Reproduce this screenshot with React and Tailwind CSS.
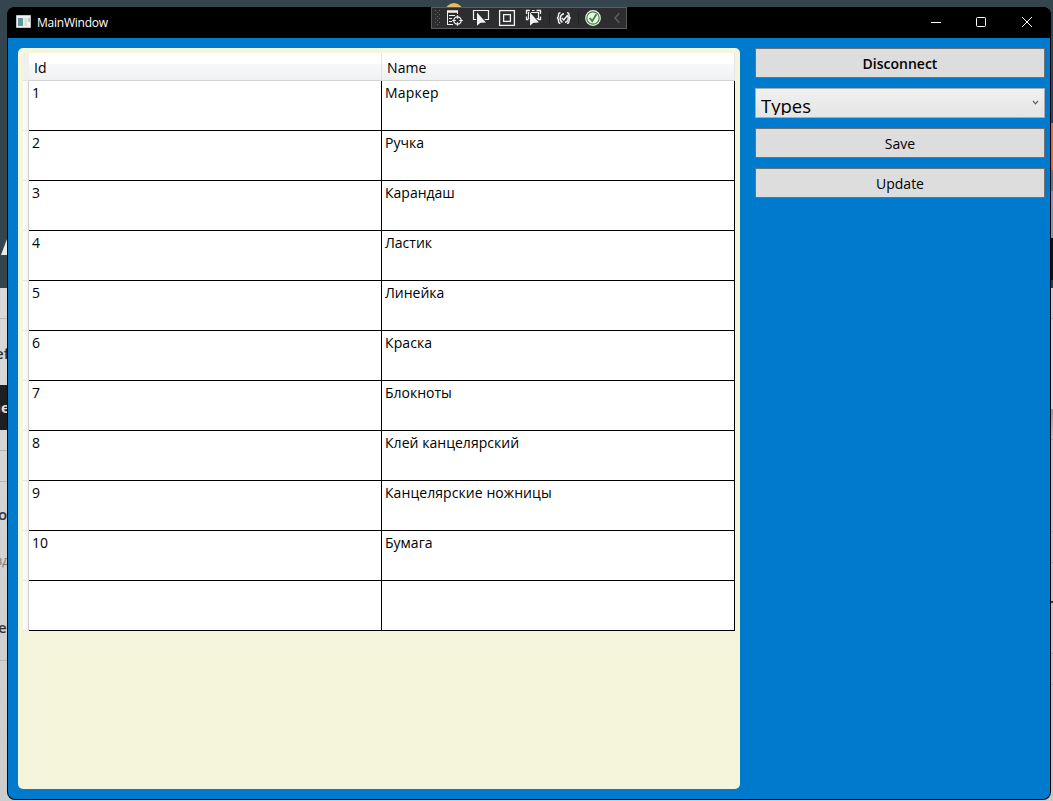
import React from "react";

const rows = [
  ["1", "Маркер", "tracking-[0.2px]"],
  ["2", "Ручка", "tracking-[0.05px]"],
  ["3", "Карандаш", "tracking-[0px]"],
  ["4", "Ластик", "tracking-[0px]"],
  ["5", "Линейка", "tracking-[0px]"],
  ["6", "Краска", "tracking-[0.1px]"],
  ["7", "Блокноты", "tracking-[0px]"],
  ["8", "Клей канцелярский", "tracking-[0.04px]"],
  ["9", "Канцелярские ножницы", "tracking-[0.07px]"],
  ["10", "Бумага", "tracking-[0px]"],
  ["", "", ""],
];

function DebugToolbar() {
  return (
    <div className="absolute left-[431px] top-[7px] h-[22px] w-[196px] bg-[#2d2d30]">
      <svg width="196" height="22" viewBox="0 0 196 22" fill="none" stroke="#f1f1f1">
        <rect x="0.5" y="0.5" width="195" height="21" stroke="#5c5c5e" />
        <path d="M4.5 3v16M8.5 3v16" stroke="#68686a" strokeDasharray="1 3" />
        <path d="M6.5 5v14" stroke="#68686a" strokeDasharray="1 3" />
        <path d="M16 4.500h11" strokeWidth="2.500" />
        <path d="M16.500 4v13.500M16 17.500h6M18 8.500h6M18 11.500h3M18 14.500h3M26.500 5v2" />
        <circle cx="26.500" cy="13.500" r="3.700" strokeWidth="1.300" />
        <path d="M26.500 8.200v3.600M26.500 15.200v3.600M21.200 13.500h3.600M28.200 13.500h3.600" strokeWidth="1.200" />
        <path d="M47 12.500h-4.500v-9h15v9h-4" strokeWidth="1.200" />
        <path d="M46 5.500v13.300l3.100-2.900 1.700-.2 4.200-.3z" fill="#f1f1f1" stroke="#2d2d30" strokeWidth="1.600" paintOrder="stroke" />
        <rect x="68.600" y="3.600" width="14.800" height="14.800" strokeWidth="1.300" />
        <rect x="72.600" y="7.600" width="6.800" height="6.800" strokeWidth="1.300" />
        <path d="M95.500 7V3.500h3.500M105.500 3.500h4V7M95.500 9.500v3h2M109.500 9.500v3h-3.500" strokeWidth="1.300" />
        <path d="M99 11.500h-1.500v-6h10v6h-3M101 3.500h2.500" strokeWidth="1.200" />
        <path d="M99 5.500v13.300l3.100-2.900 1.700-.2 4.200-.3z" fill="#f1f1f1" stroke="#2d2d30" strokeWidth="1.600" paintOrder="stroke" />
        <path d="M118.500 4v14M147.500 4v14" stroke="#222224" />
        <path d="M129.500 5.600c-2 0-2 .9-2 2.400 0 2-.5 3-1.700 3 1.200 0 1.700 1 1.700 3 0 1.500 0 2.400 2 2.400M136 5.600c2 0 2 .9 2 2.400 0 2 .5 3 1.700 3-1.200 0-1.700 1-1.700 3 0 1.500 0 2.400-2 2.400" strokeWidth="1.400" />
        <path d="M131.500 15.300a4.600 4.600 0 0 1 1.500-8.500M134 6.800M136.500 8.500a4.600 4.600 0 0 1-2.500 7M130.800 11l2 2 4-5" strokeWidth="1.500" />
        <circle cx="162" cy="11" r="7.900" fill="#f1f1f1" stroke="none" />
        <circle cx="162" cy="11" r="6.200" stroke="#388a34" strokeWidth="1.200" />
        <path d="M158.700 11l2.500 3.200 4.200-7" stroke="#388a34" strokeWidth="1.900" />
        <path d="M188.300 6.300L184 11l4.300 4.700" stroke="#626264" strokeWidth="1.300" />
      </svg>
    </div>
  );
}

function TitleBar() {
  return (
    <header className="flex h-[31px] shrink-0 items-start bg-black pl-[9px] text-white">
      <svg width="15" height="14" viewBox="0 0 15 14" className="mt-2 shrink-0">
        <defs>
          <linearGradient id="app" x2="1" y2="1">
            <stop stopColor="#5b8fb5" />
            <stop offset="1" stopColor="#5ba57a" />
          </linearGradient>
        </defs>
        <path d="M.5 .5h14v12H.5z" fill="#f0f0f0" stroke="#c4c4c4" />
        <path d="M2 3h5v8H2z" fill="url(#app)" />
        <path d="M8.500 3h2.500v8H8.500z" fill="#dcdcdc" />
        <path d="M12 3h2v4h-2z" fill="#b4cfc0" />
      </svg>
      <span className="ml-[6px] mt-[8px] text-[12px] leading-4 tracking-[-0.23px]">MainWindow</span>
      <svg width="104" height="12" viewBox="0 0 104 12" className="ml-auto mr-[17px] mt-[9px]" fill="none" stroke="white">
        <path d="M1 6.500h10" />
        <rect x="46.500" y="1.500" width="9" height="9" rx="1" />
        <path d="M92 1l10 10M102 1L92 11" />
      </svg>
    </header>
  );
}

function TypesGrid() {
  return (
    <section className="h-[741px] w-[722px] shrink-0 rounded-[5px] bg-[#f5f5dc] p-[5px] text-[14px] leading-5 text-black">
      <div className="flex h-7 w-[712px]">
        <div className="w-[6px] border-b border-[#e4e4e4] bg-[#f0f0f0]" />
        <div className="flex flex-1 border-b border-[#d2d3d5] bg-[linear-gradient(#fff_0_11px,#f7f8fa_11px,#f0f1f3)]">
          <div className="w-[353px] border-r border-[#e3e4e6] pl-[5px] pt-[5px]">Id</div>
          <div className="flex-1 border-r border-[#e3e4e6] pl-[5px] pt-[5px] tracking-[0.1px]">Name</div>
        </div>
      </div>
      {rows.map(([id, name, tracking], i) => (
        <div key={i} className="flex h-[50px] w-[712px]">
          <div className="w-[6px] border-b border-r border-b-[#e4e4e4] border-r-[#cfcfcf] bg-linear-to-r from-white to-[#f3f3f3]" />
          <div className="w-[353px] border-b border-r border-black bg-white pl-[3px] pt-[2px]">{id}</div>
          <div className={"flex-1 border-b border-r border-black bg-white pl-[3px] pt-[2px] whitespace-nowrap " + tracking}>{name}</div>
        </div>
      ))}
    </section>
  );
}

function Sidebar() {
  const button = "h-[30px] w-full border border-[#707070] bg-[#dddddd] pt-px text-center text-[14px] leading-7";
  return (
    <aside className="flex w-[290px] flex-col gap-[10px] text-black">
      <button className={button + " font-semibold"}>Disconnect</button>
      <div className="flex h-[30px] justify-between overflow-hidden border border-[#acacac] bg-linear-to-b from-[#f0f0f0] to-[#e5e5e5] pl-[5px] pr-[5px]">
        <div className="h-[26px] overflow-hidden pt-[4px] text-[18.500px] leading-[26px]">Types</div>
        <svg width="7" height="6" viewBox="0 0 7 6" className="mt-[11px]" fill="none" stroke="#606060" strokeWidth="1.200">
          <path d="M1 1l2.500 2.800L6 1" />
        </svg>
      </div>
      <button className={button}>Save</button>
      <button className={button}>Update</button>
    </aside>
  );
}

function LeftBackdrop() {
  return (
    <div className="flex w-[7px] shrink-0 flex-col overflow-hidden text-[15px] leading-5 text-[#303030]">
      <div className="flex h-[281px] items-end pb-[33px]">
        <svg width="7" height="16" viewBox="0 0 7 16"><path d="M1 16L7 0v16z" fill="#e8eaeb" /></svg>
      </div>
      <div className="h-[31px] border-b border-[#b9b9b9]" />
      <div className="h-[66px] pt-[24px]"><div className="-ml-[5px] whitespace-nowrap font-semibold">ef</div></div>
      <div className="h-[45px] bg-[#1d1f21] pt-[12px] font-bold text-[#e0e0e0]"><div className="-ml-[9px] whitespace-nowrap">не</div></div>
      <div className="h-[21px] border-b border-[#b3b3b3]" />
      <div className="h-[31px] border-b border-[#b3b3b3]" />
      <div className="h-[179px] border-b border-[#b3b3b3] pt-[22px]">
        <div className="-ml-[2px] font-semibold">o</div>
        <div className="-ml-[4px] mt-[26px] whitespace-nowrap text-[13px] text-[#7b7b7b]">зд</div>
        <div className="-ml-[2px] mt-[47px] font-semibold">e</div>
      </div>
    </div>
  );
}

function RightBackdrop() {
  return (
    <div className="flex w-[2px] shrink-0 flex-col">
      <div className="h-[116px]" />
      <div className="h-[47px] bg-[#e06b3c]" />
      <div className="h-[21px] bg-[#66757f]" />
      <div className="h-[47px] bg-[#8a96a2]" />
      <div className="h-[42px] bg-[#0c1114]" />
      <div className="h-[8px] bg-[#2c3c44]" />
      <div className="h-[31px] border-b border-[#b0b0b0] bg-[#cfcfcf]" />
      <div className="h-[90px] bg-[#d8d8d8]" />
      <div className="h-[31px] border-b border-[#aaaaaa] bg-linear-to-b from-[#999] to-[#c8c8c8]" />
      <div className="h-[92px] border-b border-[#aaaaaa] bg-[#c8c8c8]" />
      <div className="h-[31px] border-b border-[#aaaaaa] bg-[#c8c8c8]" />
      <div className="h-[38px] bg-[#c8c8c8]" />
      <div className="h-[2px] bg-[#4a2b22]" />
      <div className="h-[51px] border-b border-[#aaaaaa] bg-[#c8c8c8]" />
      <div className="h-[31px] border-b border-[#aaaaaa] bg-[#c8c8c8]" />
      <div className="flex-1 bg-[#c8c8c8]" />
    </div>
  );
}

export default function App() {
  return (
    <div className="relative flex h-[801px] w-[1053px] flex-col overflow-hidden bg-[linear-gradient(#34454d_0_288px,#d9d9d9_288px,#cccccc)] font-['Open_Sans','Noto_Sans',sans-serif]">
      <div className="h-[7px] shrink-0 overflow-hidden">
        <div className="ml-[445px] mt-[3px] size-[18px] rounded-full bg-[#dfbd6b]" />
      </div>
      <div className="flex h-[794px]">
        <LeftBackdrop />
        <div className="flex h-[793px] w-[1044px] shrink-0 flex-col overflow-hidden rounded-[8px] bg-black">
          <TitleBar />
          <main className="mx-px mb-px flex flex-1 gap-[15px] rounded-b-[7px] bg-[#007acc] pl-[10px] pt-[10px]">
            <TypesGrid />
            <Sidebar />
          </main>
        </div>
        <RightBackdrop />
      </div>
      <DebugToolbar />
    </div>
  );
}
